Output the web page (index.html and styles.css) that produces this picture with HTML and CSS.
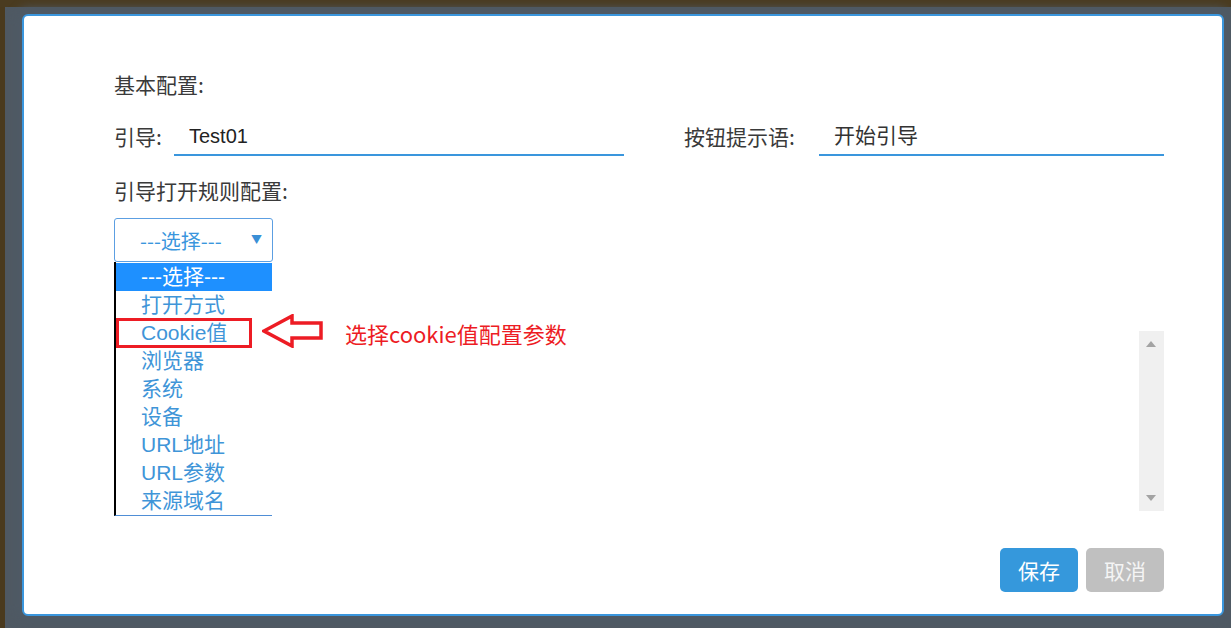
FILE: index.html
```html
<!DOCTYPE html>
<html lang="zh-CN">
<head>
  <meta charset="UTF-8">
  <title>引导配置</title>
  <link rel="stylesheet" href="styles.css">
</head>
<body>
  <div class="dialog">
    <div class="section-title">基本配置:</div>
    <div class="form-row">
      <div class="field field-guide">
        <label>引导:</label>
        <input type="text" class="latin" value="Test01">
      </div>
      <div class="field field-tip">
        <label>按钮提示语:</label>
        <input type="text" value="开始引导">
      </div>
    </div>
    <div class="section-title rule-title">引导打开规则配置:</div>
    <div class="select-wrap">
      <div class="select-box">---选择---<span class="caret">&#9660;</span></div>
      <ul class="options">
        <li class="active">---选择---</li>
        <li>打开方式</li>
        <li>Cookie值</li>
        <li>浏览器</li>
        <li>系统</li>
        <li>设备</li>
        <li>URL地址</li>
        <li>URL参数</li>
        <li>来源域名</li>
      </ul>
      <div class="mark-box"></div>
      <svg class="mark-arrow" width="62" height="34" viewBox="0 0 62 34">
        <polygon points="2,17 30,2 30,9 59,9 59,24 30,24 30,32" fill="none" stroke="#ed1c24" stroke-width="3.5" stroke-linejoin="miter"/>
      </svg>
      <div class="mark-text">选择cookie值配置参数</div>
    </div>
    <div class="rule-area">
      <div class="scrollbar">
        <span class="arrow-up"></span>
        <span class="arrow-down"></span>
      </div>
    </div>
    <div class="actions">
      <button class="btn btn-save">保存</button>
      <button class="btn btn-cancel">取消</button>
    </div>
  </div>
</body>
</html>
```

FILE: styles.css
```css
body {
  margin: 0;
  padding: 0;
  background:
    linear-gradient(#4a3b20 0 7px, transparent 7px),
    linear-gradient(90deg, #4a3a1e 0 5px, #4f5963 5px);
  font-family: "Liberation Sans", "Noto Sans CJK SC", sans-serif;
  color: #333;
  overflow: hidden;
  height: 628px;
}

.dialog {
  width: 1202px;
  height: 602px;
  box-sizing: border-box;
  margin: 14px 0 0 22px;
  padding: 56px 58px 0 90px;
  background: #fff;
  border: 2px solid #3a96dd;
  border-radius: 6px;
  box-shadow: 0 0 10px 6px #4f5a65;
}

.section-title {
  font-family: "Noto Sans CJK SC", sans-serif;
  font-size: 21px;
  line-height: 24px;
  color: #3a3a3a;
}

.form-row {
  display: flex;
  gap: 60px;
  margin-top: 20px;
}

.field {
  display: flex;
  align-items: center;
}

.field label {
  font-family: "Noto Sans CJK SC", sans-serif;
  font-size: 21px;
  color: #3a3a3a;
}

.field-guide label {
  width: 60px;
}

.field-guide input {
  width: 450px;
}

.field-tip {
  flex: 1;
}

.field-tip label {
  width: 135px;
}

.field-tip input {
  flex: 1;
}

.field input {
  height: 40px;
  box-sizing: border-box;
  padding: 0 0 2px 15px;
  border: none;
  border-bottom: 2px solid #3a96dd;
  font-family: "Noto Sans CJK SC", sans-serif;
  font-size: 21px;
  color: #333;
  outline: none;
}

.field input.latin {
  padding: 2px 0 0 15px;
  font-family: "Liberation Sans", sans-serif;
  font-size: 20px;
  color: #222;
}

.rule-title {
  margin-top: 22px;
}

.select-wrap {
  position: relative;
  margin-top: 16px;
  width: 159px;
}

.select-box {
  height: 44px;
  box-sizing: border-box;
  border: 1px solid #5c9fe2;
  border-radius: 3px;
  padding-left: 25px;
  line-height: 44px;
  font-family: "Noto Sans CJK SC", sans-serif;
  font-size: 20px;
  color: #3a96dd;
  position: relative;
}

.caret {
  position: absolute;
  right: 10px;
  top: -2px;
  font-size: 11px;
  color: #3a8fd6;
}

.options {
  position: absolute;
  top: 44px;
  left: 0;
  width: 158px;
  margin: 0;
  padding: 1px 0 0 0;
  list-style: none;
  background: #fff;
  border-left: 2px solid #000;
  border-bottom: 1px solid #4f8ed6;
  box-sizing: border-box;
}

.options li {
  height: 28px;
  line-height: 28px;
  padding-left: 25px;
  font-family: "Liberation Sans", "Noto Sans CJK SC", sans-serif;
  font-size: 21px;
  color: #3f95d8;
}

.options li.active {
  background: #1e90ff;
  color: #fff;
}

.mark-box {
  position: absolute;
  left: 2px;
  top: 100px;
  width: 136px;
  height: 30px;
  box-sizing: border-box;
  border: 3px solid #ed1c24;
}

.mark-arrow {
  position: absolute;
  left: 148px;
  top: 96px;
}

.mark-text {
  position: absolute;
  left: 231px;
  top: 100px;
  white-space: nowrap;
  font-family: "Noto Sans CJK SC", sans-serif;
  font-size: 22px;
  line-height: 30px;
  color: #ed1c24;
}

.rule-area {
  margin-top: 69px;
  height: 180px;
  display: flex;
  justify-content: flex-end;
}

.scrollbar {
  width: 25px;
  background: #f0f0f0;
  position: relative;
}

.arrow-up,
.arrow-down {
  position: absolute;
  left: 7px;
  width: 0;
  height: 0;
  border-left: 5px solid transparent;
  border-right: 5px solid transparent;
}

.arrow-up {
  top: 10px;
  border-bottom: 6px solid #a3a3a3;
}

.arrow-down {
  bottom: 10px;
  border-top: 6px solid #a3a3a3;
}

.actions {
  display: flex;
  justify-content: flex-end;
  gap: 8px;
  margin-top: 37px;
}

.btn {
  width: 78px;
  height: 44px;
  border: none;
  border-radius: 5px;
  font-family: "Noto Sans CJK SC", sans-serif;
  font-size: 21px;
  cursor: pointer;
}

.btn-save {
  background: #3598dc;
  color: #fff;
}

.btn-cancel {
  background: #c0c0c0;
  color: #f4f4f4;
}
```
